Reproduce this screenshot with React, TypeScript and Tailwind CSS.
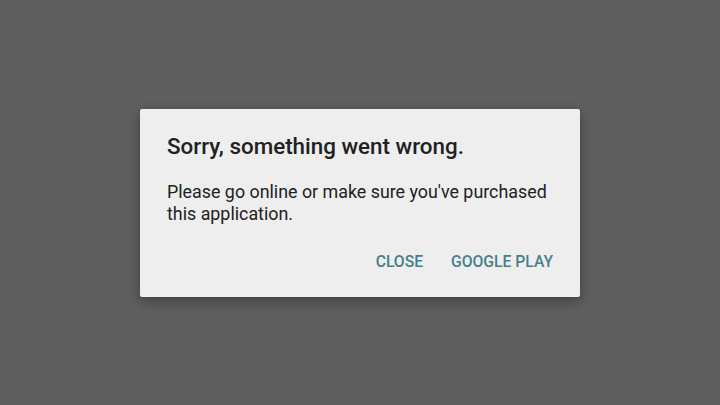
export default function App() {
  return (
    <div className="flex h-[405px] w-[720px] items-center justify-center bg-[#5f5f5f] font-['Roboto',sans-serif]">
      <div className="w-[440px] rounded-[2px] bg-[#eeeeee] pb-[25px] pl-[27px] pr-[27px] pt-[23px] shadow-[0_4px_14px_rgba(0,0,0,0.35)]">
        <h1 className="text-[22.4px] font-medium leading-[28px] text-[#212121]">Sorry, something went wrong.</h1>
        <p className="mt-[21px] text-[17.85px] leading-[22px] text-[#212121]">
          Please go online or make sure you've purchased this application.
        </p>
        <div className="mt-[27px] flex justify-end gap-[28px]">
          <button className="text-[15.7px] font-medium leading-[20px] text-[#43808c]">CLOSE</button>
          <button className="text-[15.7px] font-medium leading-[20px] text-[#43808c]">GOOGLE PLAY</button>
        </div>
      </div>
    </div>
  );
}
